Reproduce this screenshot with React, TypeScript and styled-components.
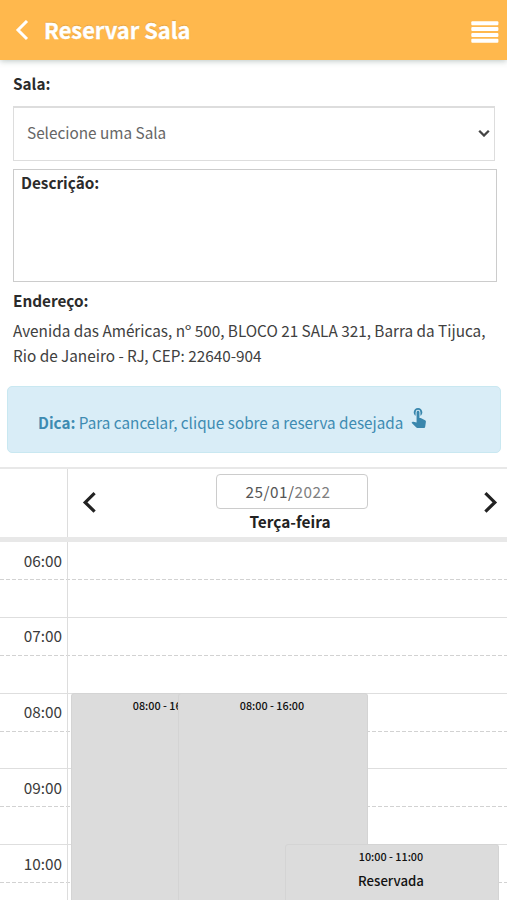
import React from "react";
import styled, { createGlobalStyle } from "styled-components";
import { MdTouchApp } from "react-icons/md";

const GlobalStyle = createGlobalStyle`
  *, *::before, *::after { box-sizing: border-box; }
  html, body { margin: 0; padding: 0; }
  body {
    height: 900px;
    overflow: hidden;
    background: #fff;
    color: #3a3a3a;
    font-family: "Noto Sans CJK SC", "Noto Sans", sans-serif;
    font-size: 15.32px;
    line-height: 24.5px;
  }
`;

const Page = styled.div`
  height: 900px;
  overflow: hidden;
  display: flex;
  flex-direction: column;
`;

const TopBar = styled.header`
  flex: none;
  height: 60px;
  padding: 2px 8px 0 15px;
  display: flex;
  align-items: center;
  background: #ffb84d;
  box-shadow: 0 1px 6px rgba(60, 90, 80, 0.35);
`;

const Title = styled.h1`
  flex: 1;
  margin: -3px 0 0 15px;
  font-size: 21.85px;
  line-height: 30px;
  font-weight: 700;
  color: #fff;
  -webkit-text-stroke: 0.4px #fff;
  text-shadow: 0 -1px 1px rgba(120, 80, 0, 0.25);
`;

const IconButton = styled.button`
  display: flex;
  padding: 0;
  border: 0;
  background: none;
  color: inherit;
`;

const Form = styled.section`
  flex: none;
  display: flex;
  flex-direction: column;
  padding: 11px 10px 0 13px;
`;

const Label = styled.label`
  font-weight: 700;
  font-size: 15.3px;
  color: #2b2b2b;
`;

const SelectBox = styled.div`
  display: flex;
  align-items: center;
  justify-content: space-between;
  width: 482px;
  height: 55px;
  margin-top: 10px;
  padding: 0 4px 2px 13px;
  border: 2px solid #ddd;
  border-width: 2px 1.5px 1.5px;
  color: #666;
`;

const Description = styled.div`
  height: 113px;
  margin: 8px 0 6px;
  padding: 0 7px;
  border: 1px solid #ccc;
`;

const Address = styled.p`
  margin: 6px 0 0;
  color: #404040;
`;

const Tip = styled.aside`
  flex: none;
  display: flex;
  align-items: center;
  height: 67px;
  margin: 19px 6px 0 7px;
  padding: 5px 30px 0;
  border: 1px solid #c9e8f1;
  border-radius: 5px;
  background: #d9edf7;
  color: #3e8bb2;
  font-size: 15.28px;
  white-space: pre;
`;

const TipIcon = styled(MdTouchApp)`
  margin: -11px 0 0 4px;
  color: #3a87ad;
`;

const CalendarHead = styled.div`
  flex: none;
  display: grid;
  grid-template-columns: 68px 1fr;
  height: 75px;
  margin-top: 14px;
  border-top: 2px solid #e8e8e8;
  border-bottom: 5px solid #e8e8e8;
`;

const AxisHead = styled.div`
  border-right: 1px solid #ddd;
`;

const DayNav = styled.div`
  display: flex;
  align-items: flex-start;
  justify-content: space-between;
  padding: 5px 9px 0 14px;
  color: #222;
`;

const NavButton = styled(IconButton)`
  margin-top: 17px;
`;

const DayTitle = styled.div`
  display: flex;
  flex-direction: column;
  align-items: center;
  font-weight: 700;
  font-size: 15.4px;
`;

const DateInput = styled.div`
  width: 152px;
  height: 35px;
  margin-left: 3px;
  padding-right: 7px;
  border: 1px solid #ccc;
  border-radius: 4px;
  text-align: center;
  font-weight: 400;
  font-size: 15.3px;
  line-height: 33px;
  letter-spacing: 0.5px;
  color: #555;
`;

const Year = styled.span`
  color: #808080;
`;

const TimeGrid = styled.div`
  flex: none;
  position: relative;
`;

const Hour = styled.div`
  display: grid;
  grid-template-columns: 68px 1fr;
  height: 75.75px;
  border-bottom: 1.5px solid #dedede;
  background: repeating-linear-gradient(90deg, #d2d2d2 0 4px, transparent 4px 6px) 0 37px / 100% 1px no-repeat;
`;

const HourLabel = styled.div`
  padding: 5.5px 5px 0 0;
  border-right: 1px solid #ddd;
  text-align: right;
`;

const Booking = styled.div<{ $left: number; $width: number; $top: number; $height: number }>`
  position: absolute;
  left: ${(p) => p.$left}px;
  top: ${(p) => p.$top}px;
  width: ${(p) => p.$width}px;
  height: ${(p) => p.$height}px;
  padding-right: 2px;
  border: 1px solid #d4d4d4;
  border-radius: 3px;
  background: #dcdcdc;
  text-align: center;
  color: #111;
`;

const BookingTime = styled.div`
  font-size: 10.8px;
  line-height: 22px;
  font-weight: 500;
`;

const BookingTitle = styled.div`
  font-size: 13.2px;
  line-height: 28px;
  font-weight: 500;
`;

const hours = ["06:00", "07:00", "08:00", "09:00", "10:00"];

const bookings = [
  { left: 71, width: 190, top: 151, height: 606, time: "08:00 - 16:00" },
  { left: 178, width: 190, top: 151, height: 606, time: "08:00 - 16:00" },
  { left: 285, width: 214, top: 302, height: 76, time: "10:00 - 11:00", title: "Reservada" },
];

export default function App() {
  return (
    <>
      <GlobalStyle />
      <Page>
        <TopBar>
          <IconButton aria-label="Voltar">
            <svg width="14" height="22" viewBox="0 0 14 22" fill="none" stroke="#fff" strokeWidth="3">
              <path d="M12 1 3 10l9 9" />
            </svg>
          </IconButton>
          <Title>Reservar Sala</Title>
          <IconButton aria-label="Menu">
            <svg width="28" height="24" viewBox="0 0 28 24" fill="#fff">
              <rect x="0.3" y="2.2" width="27.1" height="4" rx="1" />
              <rect x="0.3" y="8.1" width="27.1" height="4" rx="1" />
              <rect x="0.3" y="13.9" width="27.1" height="4" rx="1" />
              <rect x="0.3" y="19.7" width="27.1" height="4" rx="1" />
            </svg>
          </IconButton>
        </TopBar>

        <Form>
          <Label>Sala:</Label>
          <SelectBox>
            Selecione uma Sala
            <svg width="12" height="8" viewBox="0 0 12 8" fill="none" stroke="#444" strokeWidth="2.3">
              <path d="M1.2 1.7 6 6.5l4.8-4.8" />
            </svg>
          </SelectBox>
          <Description>
            <Label>Descrição:</Label>
          </Description>
          <Label>Endereço:</Label>
          <Address>
            Avenida das Américas, nº 500, BLOCO 21 SALA 321, Barra da Tijuca,
            <br />
            Rio de Janeiro - RJ, CEP: 22640-904
          </Address>
        </Form>

        <Tip>
          <b>Dica:</b> Para cancelar, clique sobre a reserva desejada
          <TipIcon size={23} />
        </Tip>

        <CalendarHead>
          <AxisHead />
          <DayNav>
            <NavButton aria-label="Dia anterior">
              <svg width="14" height="22" viewBox="0 0 14 22" fill="none" stroke="#222" strokeWidth="3.2">
                <path d="M12.6 2.2 3.2 11.4l9.4 9.2" />
              </svg>
            </NavButton>
            <DayTitle>
              <DateInput>
                25/01/<Year>2022</Year>
              </DateInput>
              Terça-feira
            </DayTitle>
            <NavButton aria-label="Próximo dia">
              <svg width="14" height="22" viewBox="0 0 14 22" fill="none" stroke="#222" strokeWidth="3.2">
                <path d="M1.4 2.2 10.8 11.4l-9.4 9.2" />
              </svg>
            </NavButton>
          </DayNav>
        </CalendarHead>

        <TimeGrid>
          {hours.map((h) => (
            <Hour key={h}>
              <HourLabel>{h}</HourLabel>
            </Hour>
          ))}
          {bookings.map((b) => (
            <Booking key={b.left} $left={b.left} $width={b.width} $top={b.top} $height={b.height}>
              <BookingTime>{b.time}</BookingTime>
              {b.title && <BookingTitle>{b.title}</BookingTitle>}
            </Booking>
          ))}
        </TimeGrid>
      </Page>
    </>
  );
}
